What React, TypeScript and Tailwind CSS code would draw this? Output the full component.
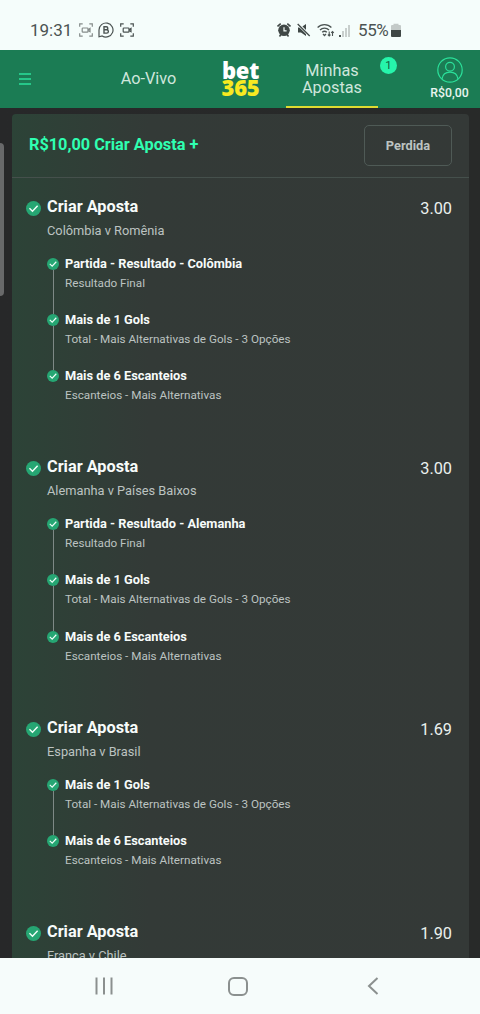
import React from "react";

type Leg = { title: string; market: string };
type Bet = { match: string; odds: string; legs: Leg[] };

const goals: Leg = { title: "Mais de 1 Gols", market: "Total - Mais Alternativas de Gols - 3 Opções" };
const corners: Leg = { title: "Mais de 6 Escanteios", market: "Escanteios - Mais Alternativas" };

const bets: Bet[] = [
  {
    match: "Colômbia v Romênia",
    odds: "3.00",
    legs: [{ title: "Partida - Resultado - Colômbia", market: "Resultado Final" }, goals, corners],
  },
  {
    match: "Alemanha v Países Baixos",
    odds: "3.00",
    legs: [{ title: "Partida - Resultado - Alemanha", market: "Resultado Final" }, goals, corners],
  },
  { match: "Espanha v Brasil", odds: "1.69", legs: [goals, corners] },
  { match: "França v Chile", odds: "1.90", legs: [] },
];

function Check({ className }: { className: string }) {
  return (
    <svg viewBox="0 0 16 16" className={className}>
      <circle cx="8" cy="8" r="8" fill="#26a673" />
      <path d="M3.7 7.8 6.9 10.9 12.4 5" fill="none" stroke="#f2fffa" strokeWidth="1.5" />
    </svg>
  );
}

function CaptureIcon({ className }: { className: string }) {
  return (
    <svg viewBox="0 0 14 14" fill="none" stroke="currentColor" strokeWidth="1.2" className={className}>
      <path d="M.7 3.8V.8H3.7M10.3.8h3v3M13.3 10.2v3h-3M3.7 13.2h-3v-3" />
      <rect x="3.2" y="5" width="5.8" height="4.2" rx=".8" />
      <path d="M9 6.7 11 5.4v3.4L9 7.6" />
    </svg>
  );
}

function StatusBar() {
  return (
    <div className="flex h-[50px] shrink-0 items-center justify-between bg-[#f5fdfb] pt-[10px] pr-[79px] pl-[30px] text-[#4b5352]">
      <div className="flex items-center">
        <span className="w-[49px] text-[17px] leading-5">19:31</span>
        <CaptureIcon className="size-[14px] text-[#858c8a]" />
        <svg viewBox="0 0 16 16" fill="none" stroke="currentColor" strokeWidth="1.2" className="ml-[5px] size-4">
          <path d="M1 14.8V8a7 7 0 1 1 3.2 5.9L1 14.8Z" />
          <path d="M6 4.7h2.3a1.5 1.5 0 0 1 0 3H6h2.7a1.7 1.7 0 0 1 0 3.4H6Z" strokeWidth="1.4" />
        </svg>
        <CaptureIcon className="ml-[6px] size-[14px]" />
      </div>
      <div className="flex items-center">
        <svg viewBox="0 0 14 14" className="size-[14px]">
          <path d="M.5 3.5 3.7.6M13.5 3.5 10.3.6M2.5 13.4l1.2-1.6M11.5 13.4l-1.2-1.6" stroke="#3f4745" strokeWidth="1.6" />
          <circle cx="7" cy="7.3" r="5.8" fill="#3f4745" />
          <path d="M7 4.3v3.5h2.6" stroke="#f5fdfb" strokeWidth="1.2" fill="none" />
        </svg>
        <svg viewBox="0 0 14 14" className="ml-[6px] size-[14px]">
          <path d="M1 4.6h3L9 1v12L4 9.4H1Z" fill="#3f4745" />
          <path d="m1 1 12 12" stroke="#f5fdfb" strokeWidth="3" />
          <path d="m.7 1 12 12" stroke="#3f4745" strokeWidth="1.3" />
        </svg>
        <svg viewBox="0 0 18 14" fill="none" stroke="#4b5352" strokeWidth="1.3" className="ml-[6px] h-[14px] w-[18px]">
          <path d="M.6 4.5a9.5 9.5 0 0 1 13.8 0M3 7a6.3 6.3 0 0 1 9 0M5.2 9.3a3.4 3.4 0 0 1 4.6 0" />
          <path d="m6 11 1.5 1.5L9 11" />
          <path d="M12.2 8.5v4.4m-1.3-1.2 1.3 1.3 1.3-1.3M15.5 13V8.6m-1.3 1.3 1.3-1.3 1.3 1.3" strokeWidth="1.1" />
        </svg>
        <div className="ml-1 flex h-[13px] items-end gap-[1px]">
          <i className="h-[2px] w-[2px] bg-[#4b5352]" />
          <i className="h-[6px] w-[2px] bg-[#c8cfcd]" />
          <i className="h-[9px] w-[2px] bg-[#c8cfcd]" />
          <i className="h-[12px] w-[2px] bg-[#c8cfcd]" />
        </div>
        <span className="ml-[8px] w-[33px] text-[17px] leading-5 tracking-[-0.4px]">55%</span>
        <svg viewBox="0 0 10 14" className="h-[14px] w-[10px]">
          <path d="M0 3a1 1 0 0 1 1-1h1.5V.8h5V2H9a1 1 0 0 1 1 1v4H0Z" fill="#c3cac8" />
          <path d="M0 7h10v6a1 1 0 0 1-1 1H1a1 1 0 0 1-1-1Z" fill="#3f4745" />
        </svg>
      </div>
    </div>
  );
}

function Header() {
  return (
    <header className="flex h-[58px] shrink-0 items-stretch bg-[#1b7c54]">
      <div className="flex w-[91px] items-center pl-[19px]">
        <svg viewBox="0 0 12 12" stroke="#2be09a" strokeWidth="1.3" className="size-3">
          <path d="M0 1h12M0 6h12M0 11h12" />
        </svg>
      </div>
      <span className="flex w-[115px] items-center justify-center text-[16.3px] text-[#cfe6dc]">Ao-Vivo</span>
      <div className="flex w-[69px] flex-col items-center pt-[12px] font-['Open_Sans',sans-serif] text-[22px] leading-[17px] font-extrabold tracking-[-0.3px]">
        <span className="text-white">bet</span>
        <span className="text-[#f7e921]">365</span>
      </div>
      <div className="relative ml-[11px] w-[92px] border-b-2 border-[#dedb31] pt-[12px] text-center text-[16.3px] leading-[17px] text-[#cfe6dc]">
        Minhas
        <br />
        Apostas
        <span className="absolute top-[7px] left-[94px] size-[17px] rounded-full bg-[#26f5ab] text-[11.5px] leading-[17px] text-[#145c40]">1</span>
      </div>
      <div className="ml-auto flex w-[61px] flex-col items-center pt-[7px]">
        <svg viewBox="0 0 26 26" fill="none" stroke="#2be09a" strokeWidth="1.2" className="size-[26px]">
          <circle cx="13" cy="13" r="12.2" />
          <circle cx="13" cy="9.8" r="4.4" />
          <path d="M5 21.8c.7-4.3 3.5-6.6 8-6.6s7.300 2.300 8 6.600" />
        </svg>
        <span className="mt-[2px] text-[12.300px] leading-4 font-medium text-[#e8f5ef]">R$0,00</span>
      </div>
    </header>
  );
}

function BetBlock({ bet }: { bet: Bet }) {
  return (
    <section className="pb-[32.1px]">
      <div className="flex h-[60px] items-start pr-[17px] pl-[14px]">
        <Check className="mt-[5px] size-[15px]" />
        <div className="ml-[6px]">
          <h2 className="text-[16.300px] leading-[22px] font-bold text-[#f7fbfa]">{bet.match && "Criar Aposta"}</h2>
          <p className="mt-[2px] text-[12.800px] leading-[22px] text-[#bcc3c1]">{bet.match}</p>
        </div>
        <span className="mt-[2px] ml-auto text-[16.300px] leading-[22px] text-[#eaf0ee]">{bet.odds}</span>
      </div>
      {bet.legs.map((leg, i) => (
        <div key={leg.title} className="flex h-[56.1px] pl-[35px]">
          <div className="flex w-3 flex-col items-center">
            {i > 0 ? <i className="h-[2px] w-px bg-[#7e8986]" /> : <i className="h-[2px]" />}
            <Check className="size-3 shrink-0" />
            {i < bet.legs.length - 1 && <i className="w-px grow bg-[#7e8986]" />}
          </div>
          <div className="ml-[6px]">
            <h3 className="text-[12.800px] leading-4 font-bold text-[#f7fbfa]">{leg.title}</h3>
            <p className="mt-[3px] text-[11.700px] leading-4 text-[#bcc3c1]">{leg.market}</p>
          </div>
        </div>
      ))}
    </section>
  );
}

export default function App() {
  return (
    <div className="flex h-[1014px] w-[480px] flex-col overflow-hidden bg-[#282a2b] font-[Roboto,sans-serif]">
      <StatusBar />
      <Header />
      <main className="flex h-[850px] shrink-0 items-start overflow-hidden bg-linear-to-r from-[#272829] to-[#282a29]">
        <div className="mt-[35px] h-[153px] w-1 shrink-0 rounded-r bg-[#68696a]" />
        <div className="mt-[6px] ml-[8px] w-[457px] shrink-0 rounded-t-[4px] bg-[#343a38] bg-linear-to-r from-[#2c4337] via-[#333a37] via-30% to-[#343937]">
          <div className="flex h-[64px] items-center justify-between border-b border-[#45504c] pr-[17px] pl-[17px]">
            <h1 className="text-[16.300px] font-bold text-[#2fffb1]">R$10,00 Criar Aposta +</h1>
            <button className="h-[41px] w-[88px] rounded-[5px] border border-[#4f5a56] text-[12.800px] font-bold text-[#bcc3c1]">Perdida</button>
          </div>
          <div className="pt-[18px]">
            {bets.map((bet) => (
              <BetBlock key={bet.match} bet={bet} />
            ))}
          </div>
        </div>
      </main>
      <nav className="flex h-[56px] shrink-0 items-center bg-[#f6fcfb] pl-[95px] text-[#8b908f]">
        <svg viewBox="0 0 18 18" stroke="currentColor" strokeWidth="2" className="size-[18px]">
          <path d="M1.500.500v17M9 .500v17M16.500.500v17" />
        </svg>
        <i className="ml-[115px] h-[19px] w-[20px] rounded-[6px] border-2 border-current" />
        <svg viewBox="0 0 12 18" fill="none" stroke="currentColor" strokeWidth="2" className="ml-[119px] h-[18px] w-3">
          <path d="M10.500 1 2 9l8.500 8" />
        </svg>
      </nav>
    </div>
  );
}
